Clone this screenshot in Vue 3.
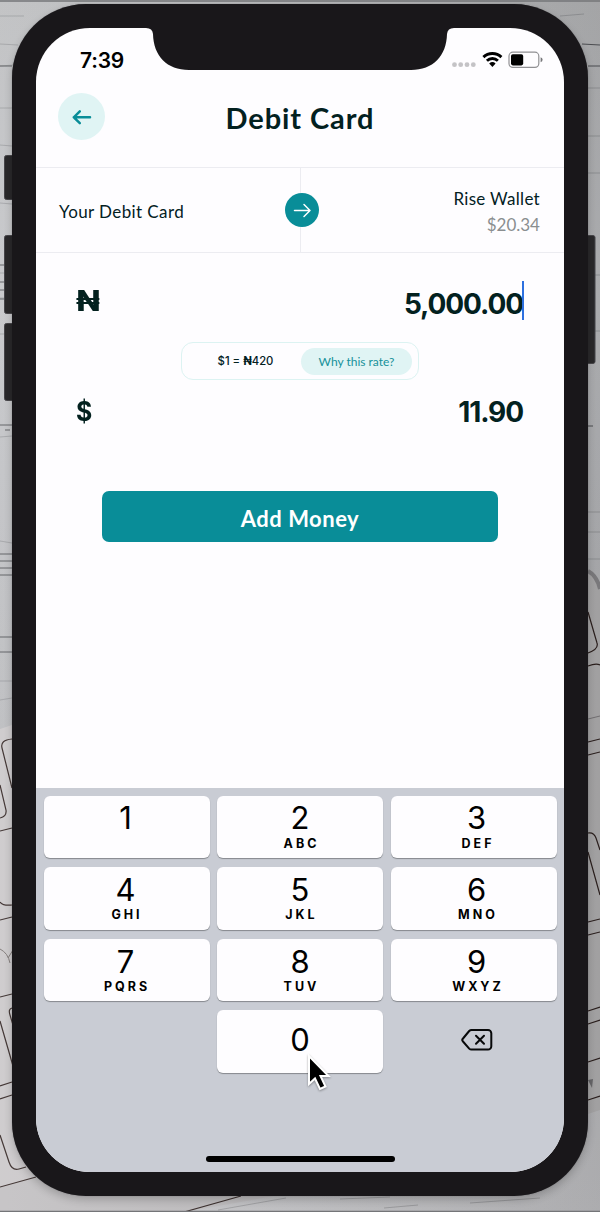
<script setup>
const keys = [
  { digit: '1', letters: '' },
  { digit: '2', letters: 'ABC' },
  { digit: '3', letters: 'DEF' },
  { digit: '4', letters: 'GHI' },
  { digit: '5', letters: 'JKL' },
  { digit: '6', letters: 'MNO' },
  { digit: '7', letters: 'PQRS' },
  { digit: '8', letters: 'TUV' },
  { digit: '9', letters: 'WXYZ' },
]
</script>

<template>
  <main class="desk">
    <!-- Desk surface: painted wood with wireframe sheets -->
    <svg class="scene" width="600" height="1212" viewBox="0 0 600 1212" aria-hidden="true">
      <defs>
        <linearGradient id="wood" x1="0" y1="0" x2="0" y2="1">
          <stop offset="0" stop-color="#bcbdbf" />
          <stop offset="0.25" stop-color="#c3c4c7" />
          <stop offset="0.6" stop-color="#b9babd" />
          <stop offset="1" stop-color="#c6c6c9" />
        </linearGradient>
        <linearGradient id="shade" x1="0" y1="0" x2="1" y2="0">
          <stop offset="0" stop-color="#fff" stop-opacity="0.1" />
          <stop offset="1" stop-color="#000" stop-opacity="0.13" />
        </linearGradient>
      </defs>
      <rect width="600" height="1212" fill="url(#wood)" />
      <g fill="none" stroke="#85868a" stroke-width="1">
        <path d="M0 16h24M0 44l18 1M0 66l14-1M0 108h12M0 145l12 1M0 203l12 1M0 273h12M0 298h12M0 334h12M0 437l12-1M0 541l12 2M0 681h12M0 700l12-2" opacity=".55" />
        <path d="M560 16l24-2M588 88h12M588 136h12M588 173h12M588 275h12M588 331h12M588 512h12M588 532h12M588 559h12" opacity=".55" />
      </g>
      <g stroke="#55575b" stroke-width="1">
        <path d="M0 66h12M0 265h12M0 282h12M0 290h12M0 299h12M0 425h12M5 430h5M0 554h12M0 561h12M0 568h12M0 575h12M0 637h12M0 652h12M582 44l18 1M588 66h12M588 426h5" />
      </g>
      <path d="M0 729l12-4 20-4v491H0z" fill="#cac7c9" />
      <path d="M588 569q10 6 12 21v520l-12 4z" fill="#b9b8b9" />
      <path d="M588 571q9 5 12 18" fill="none" stroke="#8b8a8d" stroke-width="4" />
      <path d="M0 1187l34-9 240 18-90 16H0z" fill="#c1bfc1" />
      <g fill="none" stroke="#302321" stroke-width="1.2">
        <path d="M12 739q-12 1-10 9l10 40M0 785l6 25q1 6-6 8M0 831l12-3" />
        <path d="M0 902q3 4 12 3M0 920l12-3M0 997l12-3M12 1008q-4 1-2 7l3 10" />
        <path d="M0 1021l13 45M0 1086l12-4M0 1099l12-4M0 1135l9 27q3 9 10 7l7-2" />
        <path d="M0 1187l36-10M184 1212l57-16" />
        <path d="M588 612l9 31q2 6-9 10M588 666q8-3 12-1M588 742l12-3M588 755l12-3" />
        <path d="M588 833q6-1 8 5l4 12M588 852l12 43M588 922l12-3M588 935l12-3" />
        <path d="M588 1011l12-4M588 1024l12-4M588 1062l12-4M588 1100l12-4" />
      </g>
      <path d="M0 949q8 4 10 14M8 958l5-8" fill="none" stroke="#77716f" />
      <path d="M588 719l12-3" stroke="#817e80" />
      <path d="M588 1080l5-1-1 9z" fill="#747377" />
      <path d="M218 1210l68-12M340 1199l50-2M384 1208l34-3M470 1203l70-5" stroke="#77787b" opacity=".45" />
      <rect width="600" height="1212" fill="url(#shade)" />
      <path d="M0 1h600M0 1211.5h600" stroke="#747578" stroke-width="1.5" />
      <g fill="#29282a" stroke="#47464a" stroke-width="1">
        <rect x="4.500" y="155.500" width="12" height="44" rx="2" />
        <rect x="4.500" y="235.500" width="12" height="78" rx="2" />
        <rect x="4.500" y="323.500" width="12" height="77" rx="2" />
        <rect x="583" y="235.500" width="12" height="128" rx="2" />
      </g>
    </svg>

    <section class="phone">
      <div class="screen">
        <header class="status">
          <span class="time">7:39</span>
          <svg class="indicators" width="92" height="20" viewBox="0 0 92 20">
            <g fill="#c4c3c6">
              <circle cx="4.500" cy="14.700" r="2.400" /><circle cx="10.700" cy="14.700" r="2.400" />
              <circle cx="17" cy="14.700" r="2.400" /><circle cx="23.300" cy="14.700" r="2.400" />
            </g>
            <g fill="none" stroke="#000" stroke-width="2.900">
              <path d="M33.400 7.100a12.900 12.900 0 0 1 18 0" />
              <path d="M36.900 10.800a7.900 7.900 0 0 1 11 0" />
            </g>
            <path d="M39.200 13.600a4.700 4.700 0 0 1 6.400 0L42.400 17z" />
            <rect x="59" y="2.200" width="29.800" height="15.200" rx="3.900" fill="none" stroke="#909093" stroke-width="1.200" />
            <rect x="61" y="4.200" width="12.200" height="11.200" rx="1.800" />
            <path d="M90.600 7.300q2 .6 2 2.500t-2 2.500z" fill="#77777a" />
          </svg>
        </header>

        <div class="titlebar">
          <button class="back" aria-label="Back">
            <svg width="24" height="20" viewBox="0 0 24 20" fill="none" stroke="#098d98" stroke-width="2.500" stroke-linecap="round" stroke-linejoin="round">
              <path d="M20 10.300H3.800M9.800 4.400L3.800 10.300l6 5.900" />
            </svg>
          </button>
          <h1>Debit Card</h1>
        </div>

        <div class="transfer">
          <div class="from">Your Debit Card</div>
          <div class="to">
            <span class="wallet">Rise Wallet</span>
            <span class="balance">$20.34</span>
          </div>
          <div class="direction">
            <svg width="34" height="34" viewBox="0 0 34 34" fill="none" stroke="#fff" stroke-width="1.500" stroke-linecap="round" stroke-linejoin="round">
              <path d="M9.500 17.500h15.500M19 11.500l6 6-6 6" />
            </svg>
          </div>
        </div>

        <div class="amount naira">
          <span class="currency">₦</span>
          <span class="value">5,000.00</span>
          <i class="caret"></i>
        </div>

        <div class="rate">
          <span class="quote">$1 = <b>₦</b>420</span>
          <button class="why">Why this rate?</button>
        </div>

        <div class="amount dollar">
          <span class="currency">$</span>
          <span class="value">11.90</span>
        </div>

        <button class="submit">Add Money</button>

        <div class="keyboard">
          <div class="pad">
            <button v-for="key in keys" :key="key.digit" class="key">
              <span class="digit">{{ key.digit }}</span>
              <span class="letters">{{ key.letters }}</span>
            </button>
            <span></span>
            <button class="key zero"><span class="digit">0</span></button>
            <button class="erase" aria-label="Delete">
              <svg width="32" height="24" viewBox="0 0 32 24" fill="none" stroke="#08090a" stroke-width="2" stroke-linejoin="round" stroke-linecap="round">
                <path d="M10.500 2H27a3.300 3.300 0 0 1 3.300 3.300v13a3.300 3.300 0 0 1-3.300 3.300H10.500q-1.300 0-2.300-1L2 13.500q-1.500-1.500 0-3L8.200 3q1-1 2.300-1z" />
                <path d="M15 7.800l8 8M23 7.800l-8 8" />
              </svg>
            </button>
          </div>
          <i class="home"></i>
        </div>
      </div>

      <svg class="notch" width="308" height="44" viewBox="0 0 308 44" fill="#19171a">
        <path d="M0 0v1q6.500 0 7 6C7.500 29 21 43 43 43h222c22 0 35.500-14 36-36q.5-6 7-6V0z" />
      </svg>
    </section>

    <svg class="pointer" width="26" height="40" viewBox="0 0 26 40">
      <path d="M3 2v28l6-5.500 5 10.500 5.500-2.500-5-10.500H22.500z" fill="#000" stroke="#fff" stroke-width="2" />
    </svg>
  </main>
</template>

<style>
body {
  margin: 0;
}
</style>

<style scoped>
* {
  box-sizing: border-box;
}
button {
  border: 0;
  padding: 0;
  margin: 0;
  background: none;
  font: inherit;
  color: inherit;
}
.desk {
  position: relative;
  width: 600px;
  height: 1212px;
  padding: 4px 12px 16px;
  overflow: hidden;
  font-family: Lato, 'Noto Sans', sans-serif;
  color: #03211f;
}
.scene {
  position: absolute;
  inset: 0;
}
.phone {
  position: relative;
  width: 576px;
  height: 1192px;
  padding: 24px;
  border-radius: 74px;
  background: #19171a;
  box-shadow: 0 0 1px rgba(60, 60, 63, 0.6), 0 4px 9px rgba(0, 0, 0, 0.2);
}
.screen {
  display: flex;
  flex-direction: column;
  align-items: center;
  width: 528px;
  height: 1144px;
  border-radius: 54px;
  background: #fefdff;
  overflow: hidden;
}
.notch {
  position: absolute;
  left: 134px;
  top: 23px;
}
.status {
  display: flex;
  justify-content: space-between;
  width: 100%;
  height: 50px;
  padding: 21px 22px 0 44px;
  flex: none;
}
.time {
  font: 600 21px/24px Inter, sans-serif;
  letter-spacing: -0.2px;
  color: #000;
}
.indicators {
  margin-top: 1px;
  overflow: visible;
}
.titlebar {
  display: grid;
  grid-template-columns: 47px 1fr 47px;
  width: 100%;
  height: 89px;
  padding: 15px 22px 0;
  flex: none;
}
.back {
  display: grid;
  place-items: center;
  width: 47px;
  height: 47px;
  border-radius: 50%;
  background: #e0f4f4;
}
h1 {
  margin: 0;
  text-align: center;
  font-size: 29px;
  font-weight: 700;
  line-height: 50px;
  letter-spacing: 0.9px;
}
.transfer {
  position: relative;
  display: grid;
  grid-template: 84px / 264px 264px;
  width: 100%;
  height: 86px;
  flex: none;
  border: solid #ececf1;
  border-width: 1px 0;
}
.from {
  padding-left: 23px;
  font-size: 17px;
  line-height: 88px;
  letter-spacing: 0.4px;
}
.to {
  display: flex;
  flex-direction: column;
  align-items: flex-end;
  padding: 18px 24px 0 0;
  border-left: 1px solid #ececf1;
  font-size: 17px;
  line-height: 26px;
}
.wallet {
  letter-spacing: 0.3px;
}
.balance {
  color: #8a8e90;
  line-height: 25px;
}
.direction {
  position: absolute;
  left: 249px;
  top: 25px;
  width: 34px;
  height: 34px;
  border-radius: 50%;
  background: #098d98;
}
.amount {
  display: flex;
  align-items: center;
  width: 100%;
  flex: none;
  padding: 0 41px 0 40px;
  font: 700 28px/36px Inter, sans-serif;
}
.value {
  margin-left: auto;
  letter-spacing: -1.1px;
}
.naira {
  position: relative;
  height: 89px;
  padding-top: 13px;
}
.naira .currency {
  margin-top: -7px;
  font-weight: 800;
  transform: scaleX(1.13);
  transform-origin: left;
}
.caret {
  position: absolute;
  left: 486px;
  top: 28px;
  width: 2px;
  height: 39px;
  background: #2d70df;
}
.rate {
  display: flex;
  align-items: center;
  width: 238px;
  height: 38px;
  padding-right: 6px;
  flex: none;
  border: 1px solid #dcf3f2;
  border-radius: 12px;
  font-size: 12px;
}
.quote {
  flex: 1;
  text-align: center;
  padding-left: 8px;
  font-family: Inter, sans-serif;
  font-size: 11.3px;
  font-weight: 500;
}
.why {
  width: 111px;
  height: 27px;
  border-radius: 14px;
  background: #e0f4f4;
  color: #16919a;
}
.dollar {
  height: 62px;
  padding-top: 2px;
}
.dollar .currency {
  font-size: 27px;
  transform: scaleX(0.92);
  transform-origin: left;
}
.submit {
  width: 396px;
  height: 51px;
  margin-top: 49px;
  flex: none;
  border-radius: 7px;
  background: #098d98;
  color: #fff;
  font-size: 22px;
  font-weight: 700;
  line-height: 55px;
  letter-spacing: 0.5px;
}
.keyboard {
  display: flex;
  flex-direction: column;
  align-items: center;
  justify-content: space-between;
  width: 100%;
  height: 384px;
  margin-top: auto;
  padding: 7.5px 7.5px 10px;
  background: #c9ccd4;
  color: #000;
  font-family: Inter, sans-serif;
}
.pad {
  display: grid;
  grid-template-columns: repeat(3, 166px);
  grid-auto-rows: 62.5px;
  gap: 9px 7.5px;
}
.key {
  display: flex;
  flex-direction: column;
  align-items: center;
  padding-top: 5px;
  border-radius: 6px;
  background: #fefdff;
  box-shadow: 0 1px 1px #85888d;
}
.key:nth-child(-n + 3) {
  padding-top: 4px;
}
.key:nth-child(-n + 3) .letters {
  margin-top: 1px;
}
.key:nth-child(3n + 1) {
  padding-right: 2px;
}
.key:nth-child(3n) {
  padding-left: 6px;
}
.digit {
  font-size: 31px;
  line-height: 35px;
}
.letters {
  font-size: 12.5px;
  font-weight: 700;
  line-height: 16px;
  letter-spacing: 3px;
  margin-right: -3px;
}
.zero {
  padding-top: 12px;
}
.erase {
  display: grid;
  place-items: center;
  padding: 0 0 3px 7px;
}
.home {
  width: 189px;
  height: 6px;
  border-radius: 3px;
  background: #000;
}
.pointer {
  position: absolute;
  left: 306px;
  top: 1054px;
  filter: drop-shadow(0 1px 1px rgba(0, 0, 0, 0.35));
}
</style>
